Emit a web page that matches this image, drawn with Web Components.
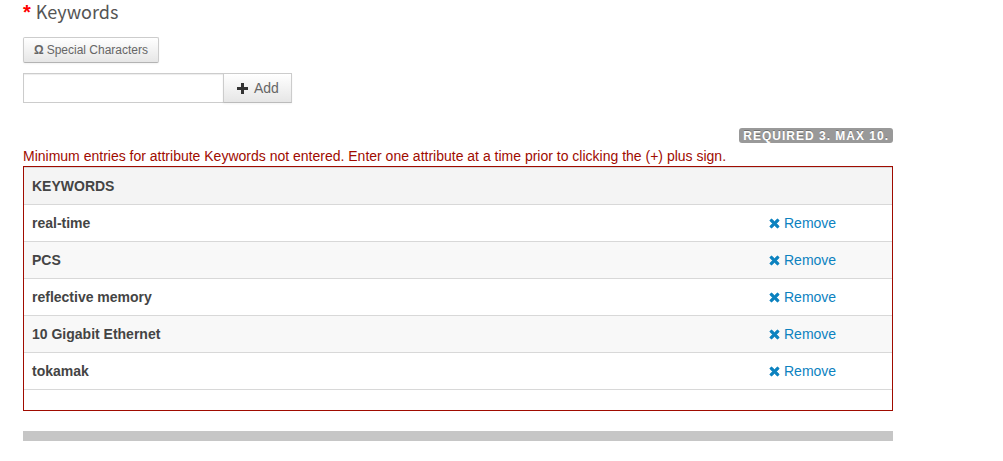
<!DOCTYPE html>
<html lang="en">
<head>
<meta charset="utf-8">
<title>Keywords</title>
<style>
body { margin: 0; background: #fff; color: #444; font: 14px/20px "Liberation Sans", Arial, sans-serif; }
</style>
</head>
<body>
<keyword-editor></keyword-editor>
<script>
const define = (name, html, setup) => {
  const template = document.createElement('template');
  template.innerHTML = html;
  customElements.define(name, class extends HTMLElement {
    constructor() {
      super();
      this.attachShadow({ mode: 'open' }).append(template.content.cloneNode(true));
    }
    connectedCallback() { if (setup) setup(this, this.shadowRoot); }
  });
};

define('field-heading', `
<style>
:host { display: block; }
h4 { display: flex; gap: 5px; margin: 0; font: 400 18px/22px "Noto Sans CJK SC", "Noto Sans", sans-serif; color: #555; }
b { color: #f00; font: 700 20px/24px "Liberation Sans", Arial, sans-serif; }
</style>
<h4><b>*</b><slot></slot></h4>`);

define('tool-button', `
<style>
:host { display: inline-flex; }
button {
  display: flex; align-items: center; gap: 3px; box-sizing: border-box; height: 26px; margin: 0; padding: 0 10px;
  border: 1px solid #ccc; border-bottom-color: #b3b3b3; border-radius: 2px;
  background: linear-gradient(#fff, #e6e6e6); box-shadow: 0 1px 2px rgba(0,0,0,.05);
  color: #666; font: 12px/20px "Liberation Sans", Arial, sans-serif; white-space: nowrap; cursor: pointer;
}
:host([large]) button { height: 30px; padding: 0 12px; gap: 6px; border-radius: 0; border-bottom-color: #bbb; font-size: 14px; }
</style>
<button type="button"><slot></slot></button>`);

define('plus-icon', `
<style>:host { display: block; width: 12px; height: 12px; } svg { display: block; }</style>
<svg width="12" height="12" viewBox="0 0 12 12" aria-hidden="true"><path fill="#333" d="M5 1h3v4h4v3H8v4H5V8H1V5h4z"/></svg>`);

define('keyword-input', `
<style>
:host { display: flex; }
input {
  box-sizing: border-box; width: 200px; height: 30px; margin: 0; padding: 4px 6px;
  border: 1px solid #ccc; border-right: 0; border-radius: 0; background: #fff;
  box-shadow: inset 0 1px 1px rgba(0,0,0,.075); color: #555; font: inherit;
}
</style>
<input type="text" aria-label="Keyword"><tool-button large><plus-icon></plus-icon>Add</tool-button>`);

define('limit-badge', `
<style>
:host { display: block; }
span {
  display: block; padding: 1px 4px 0; border-radius: 3px; background: #999; color: #fff;
  font: 700 12px/14px "Liberation Sans", Arial, sans-serif; letter-spacing: 1px;
  text-shadow: 0 -1px 0 rgba(0,0,0,.25); text-transform: uppercase; white-space: nowrap;
}
</style>
<span><slot></slot></span>`);

define('remove-link', `
<style>
:host { display: block; }
a { display: flex; align-items: center; gap: 4px; color: #0c82bf; text-decoration: none; }
svg { display: block; }
</style>
<a href="#"><svg width="11" height="12" viewBox="0 0 11 12" aria-hidden="true"><path fill="#0c82bf" stroke="#0c82bf" stroke-width=".6" d="M2.9 2.1 5.5 4.6l2.6-2.5q.4-.4.8 0l1.1 1.1q.4.4 0 .8L7.6 6.5 10 9q.4.4 0 .8l-1.1 1.1q-.4.4-.8 0L5.5 8.4l-2.6 2.5q-.4.4-.8 0L1 9.8q-.4-.4 0-.8l2.4-2.5L1 4q-.4-.4 0-.8l1.1-1.1q.4-.4.8 0z"/></svg>Remove</a>`);

define('keyword-table', `
<style>
:host { display: block; border: 1px solid #a00b00; padding-bottom: 20px; }
table { width: 100%; border-collapse: separate; border-spacing: 0; border-bottom: 1px solid #d8d8d8; table-layout: fixed; }
th, td { padding: 8px; border-top: 1px solid #d8d8d8; text-align: left; font-weight: 700; line-height: 20px; }
thead th { background: #f4f4f4; }
td { font-weight: 400; }
.action { width: 115px; }
tbody tr:nth-child(even) { background: #f8f8f8; }
</style>
<table>
<thead><tr><th scope="col">KEYWORDS</th><th class="action"></th></tr></thead>
<tbody></tbody>
</table>`, (host, root) => {
  const body = root.querySelector('tbody');
  body.replaceChildren(...host.getAttribute('items').split('|').map(word => {
    const row = document.createElement('tr');
    const name = document.createElement('th');
    name.scope = 'row';
    name.textContent = word;
    const action = document.createElement('td');
    action.append(document.createElement('remove-link'));
    row.append(name, action);
    return row;
  }));
});

define('keyword-editor', `
<style>
:host { display: flex; flex-direction: column; padding: 0 110px 20px 23px; }
.tools { display: flex; margin: 13px 0 10px; }
.limit { display: flex; justify-content: flex-end; margin: 25px 0 3px; }
p { margin: 0; color: #a00b00; }
hr { width: 100%; height: 10px; margin: 20px 0 0; border: 0; background: #c6c6c6; }
</style>
<field-heading>Keywords</field-heading>
<div class="tools"><tool-button><b>Ω</b>Special Characters</tool-button></div>
<keyword-input></keyword-input>
<div class="limit"><limit-badge>Required 3. Max 10.</limit-badge></div>
<p role="alert">Minimum entries for attribute Keywords not entered. Enter one attribute at a time prior to clicking the (+) plus sign.</p>
<keyword-table items="real-time|PCS|reflective memory|10 Gigabit Ethernet|tokamak"></keyword-table>
<hr>`);
</script>
</body>
</html>
